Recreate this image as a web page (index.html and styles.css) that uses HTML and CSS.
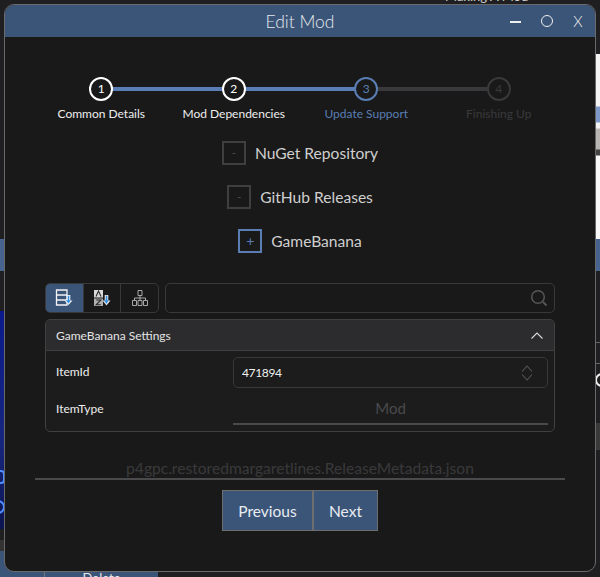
FILE: index.html
```html
<!DOCTYPE html>
<html lang="en">
<head>
<meta charset="utf-8">
<title>Edit Mod</title>
<link rel="stylesheet" href="styles.css">
</head>
<body>
<div class="desktop">
  <div class="bg-top">Making A Mod</div>
  <div class="bg-left-blue"></div>
  <div class="bg-left-art"></div>
  <div class="bg-ring bg-ring-a"></div>
  <div class="bg-ring bg-ring-b"></div>
  <div class="bg-left-strip"></div>
  <div class="bg-right-white"></div>
  <div class="bg-right-blue"></div>
  <div class="bg-right-line bg-right-line-a"></div>
  <div class="bg-right-line bg-right-line-b"></div>
  <div class="bg-ring bg-ring-c"></div>
  <div class="bg-right-gray"></div>
  <div class="bg-bottom"><span class="bg-bottom-label">Delete</span></div>

  <section class="window">
    <header class="titlebar">
      <h1 class="title">Edit Mod</h1>
      <div class="controls">
        <span class="ctl-min"></span>
        <span class="ctl-max"></span>
        <span class="ctl-close">X</span>
      </div>
    </header>

    <div class="content">
      <ol class="stepper">
        <li class="step done"><span class="dot">1</span><span class="step-label">Common Details</span></li>
        <li class="step done"><span class="dot">2</span><span class="step-label">Mod Dependencies</span></li>
        <li class="step current"><span class="dot">3</span><span class="step-label">Update Support</span></li>
        <li class="step todo"><span class="dot">4</span><span class="step-label">Finishing Up</span></li>
      </ol>

      <div class="toggles">
        <div class="toggle"><span class="box">-</span><span class="toggle-text">NuGet Repository</span></div>
        <div class="toggle"><span class="box">-</span><span class="toggle-text">GitHub Releases</span></div>
        <div class="toggle on"><span class="box">+</span><span class="toggle-text">GameBanana</span></div>
      </div>

      <div class="settings">
        <div class="toolbar">
          <div class="segments">
            <button class="seg active" type="button">
              <svg width="18" height="18" viewBox="0 0 18 18"><path d="M1.500 1h10.500v15H1.500zM1.500 6h10.500M1.500 11h10.500" fill="none" stroke="#f4f4f4" stroke-width="1.300"/><path d="M9.500 11.500L13.500 16l4-4.500h-2.200V6h-3.600v5.500z" fill="#f4f4f4"/><path d="M10.800 11.200h2v-4.500h1.500v4.500h1.500L13.500 14.500z" fill="#2f8fe8"/></svg>
            </button>
            <button class="seg" type="button">
              <svg width="18" height="18" viewBox="0 0 18 18"><rect x="1" y="1" width="9" height="7.500" fill="#d8d8d8"/><rect x="1" y="9.500" width="9" height="7.500" fill="#b0b0b0"/><path d="M3 7.500l2.500-5.500 2.500 5.500M3.200 11h4.600L3.200 15.800h4.600" fill="none" stroke="#2a2a2a" stroke-width="1.100"/><path d="M9.500 11.500L13.500 16.500l4-5h-2.200V6h-3.600v5.500z" fill="#e4e4e4"/><path d="M10.800 11.200h2v-4.500h1.500v4.500h1.500L13.500 14.800z" fill="#2f8fe8"/></svg>
            </button>
            <button class="seg" type="button">
              <svg width="18" height="18" viewBox="0 0 18 18"><path d="M7 1.500h4v5H7zM1.500 11.500h4v5h-4zM7 11.500h4v5H7zM12.500 11.500h4v5h-4zM9 6.500v5M3.500 11.500V9h11v2.500" fill="none" stroke="#a8a8a8"/></svg>
            </button>
          </div>
          <div class="search">
            <svg width="18" height="18" viewBox="0 0 18 18"><circle cx="8" cy="8" r="6.300" fill="none" stroke="#565656" stroke-width="1.500"/><path d="M13 13l3.500 3.500" stroke="#565656" stroke-width="2"/></svg>
          </div>
        </div>

        <div class="panel">
          <div class="panel-head">
            <span>GameBanana Settings</span>
            <svg width="12" height="7" viewBox="0 0 12 7"><path d="M.5 6.500L6 1l5.500 5.500" fill="none" stroke="#d8d8d8" stroke-width="1.100"/></svg>
          </div>
          <div class="panel-body">
            <div class="field">
              <label class="field-label">ItemId</label>
              <div class="number-input">
                <span>471894</span>
                <svg width="12" height="16" viewBox="0 0 12 16"><path d="M1 6.500L6 1l5 5.500M1 9.500L6 15l5-5.500" fill="none" stroke="#565656" stroke-width="1.100"/></svg>
              </div>
            </div>
            <div class="field">
              <label class="field-label">ItemType</label>
              <div class="select-input">Mod</div>
            </div>
          </div>
        </div>
      </div>

      <div class="filename">p4gpc.restoredmargaretlines.ReleaseMetadata.json</div>
      <div class="rule"></div>

      <div class="actions">
        <button class="action prev" type="button">Previous</button>
        <button class="action next" type="button">Next</button>
      </div>
    </div>
  </section>
</div>
</body>
</html>
```
FILE: styles.css
```css
* { box-sizing: border-box; }
html, body { margin: 0; padding: 0; }
body {
  width: 600px;
  height: 577px;
  overflow: hidden;
  background: #1f1f21;
  font-family: Lato, "Open Sans", sans-serif;
  color: #eee;
}
.desktop { position: relative; width: 600px; height: 577px; overflow: hidden; }

/* fragments of the app behind the dialog */
.bg-top { position: absolute; left: 445px; top: -12px; font-size: 13px; color: #cfcfcf; white-space: nowrap; }
.bg-left-blue { position: absolute; left: 0; top: 239px; width: 5px; height: 32px; background: #46648f; }
.bg-left-art { position: absolute; left: 0; top: 311px; width: 5px; height: 218px; background: linear-gradient(180deg, #0a1a8c, #16267e 60%, #0c1450); }
.bg-left-strip { position: absolute; left: 0; top: 540px; width: 5px; height: 11px; background: #333; }
.bg-ring { position: absolute; width: 14px; height: 14px; border: 2px solid #4d8dff; border-radius: 4px; }
.bg-ring-a { left: -9px; top: 470px; }
.bg-ring-b { left: -9px; top: 500px; border-radius: 50%; }
.bg-ring-c { left: 595px; top: 373px; border-color: #f0f0f0; border-radius: 50%; }
.bg-right-white {
  position: absolute;
  left: 595px;
  top: 54px;
  width: 5px;
  height: 185px;
  background: linear-gradient(180deg, #f4f4f4 0, #f4f4f4 52px, #7d97c9 53px, #7d97c9 68px, #f4f4f4 69px, #f4f4f4 74px, #b8b6b4 75px, #b8b6b4 95px, #444 96px, #444 101px, #f8f8f8 102px);
}
.bg-right-blue { position: absolute; left: 595px; top: 239px; width: 5px; height: 32px; background: #46648f; }
.bg-right-line { position: absolute; left: 595px; width: 5px; height: 1px; background: #666; }
.bg-right-line-a { top: 342px; }
.bg-right-line-b { top: 363px; }
.bg-right-gray { position: absolute; left: 595px; top: 423px; width: 5px; height: 27px; background: #3a3a3a; }
.bg-bottom {
  position: absolute;
  left: 0;
  top: 551px;
  width: 158px;
  height: 26px;
  background: #3b5578;
  padding-left: 44px;
  text-align: center;
}
.bg-bottom-label {
  display: block;
  height: 26px;
  padding-top: 19px;
  border-left: 1px solid #777;
  font-size: 13px;
  line-height: 16px;
  color: #e8e8e8;
}

.window {
  position: absolute;
  left: 4px;
  top: 4px;
  width: 592px;
  height: 568px;
  background: #191919;
  border: 1px solid #6a6a6a;
  border-radius: 10px;
  overflow: hidden;
  display: flex;
  flex-direction: column;
}

.titlebar {
  flex: none;
  height: 32px;
  background: #3b5578;
  display: flex;
  align-items: center;
  justify-content: center;
  position: relative;
}
.title { margin: 0; padding-top: 2px; font-size: 17.500px; font-weight: 300; color: #e4e8ee; line-height: 30px; }
.controls {
  position: absolute;
  right: 0;
  top: 0;
  height: 32px;
  display: flex;
  align-items: center;
}
.ctl-min { width: 11px; height: 1.500px; background: #f0f0f0; margin: 2px 20px 0 0; }
.ctl-max { width: 12px; height: 12px; border: 1.600px solid #f0f0f0; border-radius: 50%; margin-right: 19px; }
.ctl-close { width: 12px; margin-right: 11px; font-size: 15px; font-weight: 300; text-align: center; color: #f0f0f0; }

.content { flex: 1; padding: 0 30px; display: flex; flex-direction: column; }

.stepper {
  list-style: none;
  margin: 40px 0 0;
  padding: 0;
  display: grid;
  grid-template-columns: repeat(4, 1fr);
}
.step { position: relative; display: flex; flex-direction: column; align-items: center; }
.step::after {
  content: "";
  position: absolute;
  left: 50%;
  top: 10px;
  width: 100%;
  height: 4px;
  background: #5a7eb4;
}
.step.current::after { background: #39393b; }
.step.todo::after { display: none; }
.dot {
  position: relative;
  z-index: 1;
  width: 24px;
  height: 24px;
  border-radius: 50%;
  border: 2px solid #fff;
  background: #191919;
  font-size: 12px;
  line-height: 20px;
  text-align: center;
  color: #fff;
}
.step-label { margin-top: 5px; font-size: 12px; line-height: 16px; color: #eee; white-space: nowrap; }
.current .dot { border-color: #5a7eb4; color: #5a7eb4; }
.current .step-label { color: #5a7eb4; }
.todo .dot { border-color: #39393b; color: #39393b; }
.todo .step-label { color: #39393b; }

.toggles { margin-top: 19px; display: flex; flex-direction: column; align-items: center; gap: 20px; }
.toggle { display: flex; align-items: center; gap: 9px; height: 24px; }
.box {
  width: 24px;
  height: 24px;
  border: 2px solid #3f3f41;
  text-align: center;
  font-size: 12px;
  line-height: 19px;
  color: #4a4a4c;
}
.toggle-text { font-size: 15.600px; color: #cfcfcf; }
.on .box { border-color: #5a7eb4; color: #5a7eb4; font-size: 14px; }

.settings { margin-top: 30px; padding: 0 10px; }
.toolbar { display: flex; gap: 6px; height: 30px; }
.segments {
  display: flex;
  width: 114px;
  border: 1px solid #39393b;
  border-radius: 5px;
  overflow: hidden;
}
.seg {
  flex: 1;
  border: 0;
  border-left: 1px solid #39393b;
  padding: 0;
  background: transparent;
  display: flex;
  align-items: center;
  justify-content: center;
}
.seg.active { background: #3b5578; border-left: 0; }
.search {
  flex: 1;
  border: 1px solid #39393b;
  border-radius: 5px;
  display: flex;
  align-items: center;
  justify-content: flex-end;
  padding-right: 6px;
}

.panel {
  margin-top: 6px;
  height: 113px;
  border: 1px solid #404042;
  border-radius: 5px;
  background: #1c1c1c;
  overflow: hidden;
  display: flex;
  flex-direction: column;
}
.panel-head {
  flex: none;
  height: 31px;
  background: #2c2c2e;
  border-bottom: 1px solid #404042;
  display: flex;
  align-items: center;
  justify-content: space-between;
  padding: 0 11px 0 10px;
  font-size: 12px;
  color: #e4e4e4;
}
.panel-body { padding: 6px 6px 0 10px; display: flex; flex-direction: column; gap: 6px; }
.field { display: flex; align-items: center; height: 31px; }
.field-label { width: 177px; flex: none; font-size: 12px; color: #eee; padding-bottom: 3px; }
.number-input {
  flex: 1;
  height: 31px;
  border: 1px solid #39393b;
  border-radius: 5px;
  display: flex;
  align-items: center;
  justify-content: space-between;
  padding: 0 14px 0 8px;
  font-size: 12px;
  letter-spacing: -0.350px;
  color: #f0f0f0;
}
.select-input {
  flex: 1;
  height: 30px;
  border-bottom: 2px solid #4a4a4c;
  text-align: center;
  font-size: 15px;
  line-height: 27px;
  color: #4a4a4c;
}

.filename { margin-top: 28px; text-align: center; font-size: 15.600px; line-height: 16px; color: #39393b; white-space: nowrap; }
.rule { margin-top: 2px; height: 2px; background: #4a4a4c; }

.actions { margin-top: 10px; display: flex; justify-content: center; }
.action {
  height: 41px;
  background: #3b5578;
  border: 1px solid #6e6e6e;
  font-family: Lato, "Open Sans", sans-serif;
  font-size: 15.500px;
  color: #e8ecf2;
  padding: 0;
}
.prev { width: 91px; }
.next { width: 65px; }
```
